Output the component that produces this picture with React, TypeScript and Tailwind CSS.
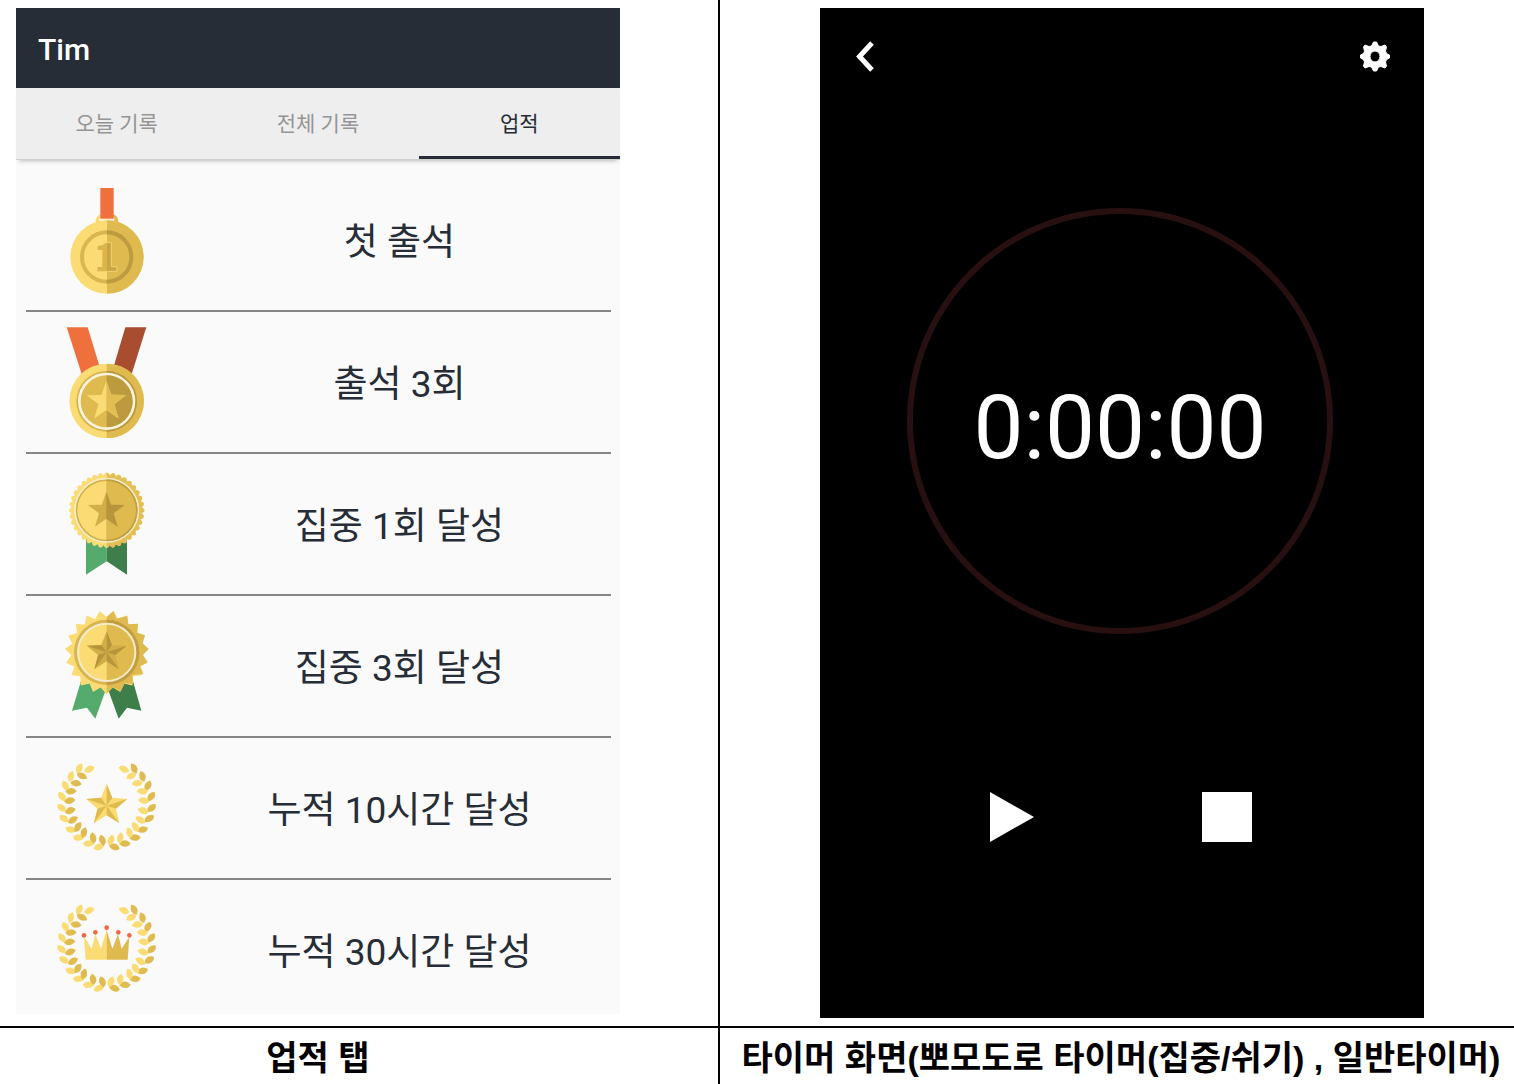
import { useState, type ReactNode } from "react";

const LIGHT = "#fbdc74";
const DARK = "#dfba4e";
const SHADE = "#b8973c";

function starPoints(cx: number, cy: number, outer: number, inner: number, count = 5, turn = 0) {
  const points: string[] = [];
  for (let i = 0; i < count * 2; i++) {
    const r = i % 2 === 0 ? outer : inner;
    const a = (Math.PI * i) / count + (turn * Math.PI) / 180;
    points.push(`${(cx + r * Math.sin(a)).toFixed(1)},${(cy - r * Math.cos(a)).toFixed(1)}`);
  }
  return points.join(" ");
}

function scallopPoints(cx: number, cy: number, radius: number, depth: number, count: number, sweep = 360) {
  const points: string[] = [];
  for (let i = 0; i <= sweep; i++) {
    const a = (Math.PI * i) / 180;
    const r = radius - depth + depth * Math.abs(Math.cos((a * count) / 2)) * 1.4;
    points.push(`${(cx + r * Math.sin(a)).toFixed(1)},${(cy - r * Math.cos(a)).toFixed(1)}`);
  }
  return points.join(" ");
}

function facets(cx: number, cy: number, outer: number, inner: number) {
  const at = (r: number, deg: number) => {
    const a = (deg * Math.PI) / 180;
    return `${(cx + r * Math.sin(a)).toFixed(1)},${(cy - r * Math.cos(a)).toFixed(1)}`;
  };
  return [0, 1, 2, 3, 4].map((i) => `${cx},${cy} ${at(outer, i * 72)} ${at(inner, i * 72 + 36)}`);
}

function Icon({ top, children }: { top: number; children: ReactNode }) {
  return (
    <svg aria-hidden="true" width="114" height="112" viewBox={`0 ${top} 342 336`} className="shrink-0">
      {children}
    </svg>
  );
}

function FirstMedal() {
  return (
    <Icon top={27}>
      <path d="M136 146Q136 118 158 118H170V146Z" fill={LIGHT} />
      <path d="M206 146Q206 118 184 118H170V146Z" fill={DARK} />
      <rect x="148" y="128" width="45" height="11" fill="#fdf3d2" />
      <rect x="151" y="39" width="40" height="92" fill="#f0703d" />
      <circle cx="171" cy="246" r="110" fill={LIGHT} />
      <path d="M171 136A110 110 0 0 1 171 356Z" fill={DARK} />
      <circle cx="170" cy="246" r="74" fill="none" stroke="#d9b64f" strokeWidth="12" />
      <path d="M170 172A74 74 0 0 1 170 320" fill="none" stroke="#bd9b40" strokeWidth="12" />
      <path d="M143 225V213Q160 212 167 203H171V289H142V276H157V225Z" fill="#d9b54c" />
      <path d="M171 203H183V275H200V289H171Z" fill="#c9a645" />
      <path d="M167 203H184V275H201V289H142" fill="none" stroke="#f3d069" strokeWidth="3" />
    </Icon>
  );
}

function StarMedal() {
  return (
    <Icon top={33}>
      <path d="M50 37H113L150 158L96 180Z" fill="#f0703d" />
      <path d="M226 37H289L244 180L190 158Z" fill="#a94d30" />
      <circle cx="170" cy="258" r="112" fill={LIGHT} />
      <path d="M170 146A112 112 0 0 1 170 370Z" fill={DARK} />
      <circle cx="170" cy="259" r="91" fill="#d5b14a" />
      <path d="M170 168A91 91 0 0 1 170 350Z" fill={SHADE} />
      <circle cx="170" cy="259" r="82" fill={DARK} stroke="#faf3df" strokeWidth="8" />
      <path d="M170 181A78 78 0 0 1 170 337Z" fill="#bc9a3e" />
      <polygon points={starPoints(169, 260, 62, 25)} fill={LIGHT} />
      <path d="M169 198L184 238L227 240L194 268L206 309L169 286Z" fill="#e2be52" />
    </Icon>
  );
}

function RosetteMedal() {
  return (
    <Icon top={24}>
      <path d="M108 225H170V304L108 344Z" fill="#55ab6d" />
      <path d="M231 225H170V304L231 344Z" fill="#3d7e4b" />
      <polygon points={scallopPoints(170, 151, 111, 6, 36)} fill={LIGHT} />
      <polygon points={scallopPoints(170, 151, 111, 6, 36, 180)} fill="#e3bf55" />
      <circle cx="170" cy="151" r="95" fill="#d2ae49" stroke="#f7edcb" strokeWidth="5" />
      <circle cx="170" cy="151" r="88" fill={LIGHT} />
      <path d="M170 58A93 93 0 0 1 170 244Z" fill="#bf9d41" />
      <path d="M170 63A88 88 0 0 1 170 239Z" fill={DARK} />
      <polygon points={starPoints(169, 153, 58, 23)} fill="#d2ae49" />
      <path d="M169 95L183 134L224 135L191 160L203 200L169 177Z" fill="#b7953b" />
    </Icon>
  );
}

function BurstMedal() {
  return (
    <Icon top={30}>
      <path d="M94 240L66 332L111 323L136 356L168 268V240Z" fill="#55ab6d" />
      <path d="M248 240L274 332L231 323L206 356L174 268V240Z" fill="#3d7e4b" />
      <path d="M92 222H248V252L224 250L212 274L190 262L170 280L150 262L130 274L118 250L92 252Z" fill="#f0cb60" />
      <polygon points={starPoints(170, 157, 126, 106, 19, 9.47)} fill={LIGHT} />
      <path
        d="M170 51L190 33L199 56L232 47L235 73L264 71L262 98L285 106L278 130L296 147L279 165L293 187L271 199L280 222L248 225V252L224 250L212 274L190 262L170 280Z"
        fill={DARK}
      />
      <circle cx="170" cy="157" r="98" fill="#d9b54e" />
      <path d="M170 59A98 98 0 0 1 170 255Z" fill="#c09d42" />
      <circle cx="170" cy="157" r="86" fill={LIGHT} stroke="#f3ebcd" strokeWidth="6" />
      <path d="M170 74A83 83 0 0 1 170 240Z" fill={DARK} />
      <polygon points={starPoints(170, 157, 63, 27)} fill="#d2ae49" />
      {facets(170, 157, 63, 27).map((p) => (
        <polygon key={p} points={p} fill="#b7953b" />
      ))}
    </Icon>
  );
}

const LEAVES: [number, number, number, boolean][] = [
  [118, 58, -20, true],
  [88, 55, -60, true],
  [96, 78, 30, false],
  [63, 79, -72, true],
  [78, 100, 12, false],
  [46, 107, 68, true],
  [63, 124, 2, false],
  [36, 140, 58, true],
  [59, 152, -8, false],
  [35, 174, 46, true],
  [61, 182, -18, false],
  [42, 206, 36, true],
  [69, 210, -28, false],
  [62, 239, 20, true],
  [84, 231, -55, false],
  [85, 263, 8, true],
  [102, 248, -72, false],
  [115, 281, 5, true],
  [129, 264, 84, false],
  [147, 291, -15, true],
  [157, 271, 76, false],
];

const LEAF_PATH = "M-17 0Q-4 -15 9 -8Q14 -5 17 0Q4 13 -9 8Q-14 5 -17 0Z";

function Laurel() {
  return (
    <>
      {LEAVES.map(([x, y, angle, outer]) => (
        <g key={`${x}-${y}`}>
          <path d={LEAF_PATH} transform={`translate(${x} ${y}) rotate(${angle})`} fill={outer ? LIGHT : "#e0bb50"} />
          <path
            d={LEAF_PATH}
            transform={`translate(${340 - x} ${y}) scale(-1 1) rotate(${angle})`}
            fill={outer && x !== 118 ? "#e0bb50" : LIGHT}
          />
        </g>
      ))}
    </>
  );
}

function LaurelStar() {
  return (
    <Icon top={6}>
      <Laurel />
      <polygon points={starPoints(170, 167, 65, 29)} fill={LIGHT} />
      {facets(170, 167, 65, 29).map((p) => (
        <polygon key={p} points={p} fill={DARK} />
      ))}
    </Icon>
  );
}

function LaurelCrown() {
  return (
    <Icon top={12}>
      <g transform="translate(0 4)">
        <Laurel />
      </g>
      <path d="M102 140L125 176L136 132L153 176L170 120V209H107Z" fill={LIGHT} />
      <path d="M238 140L215 176L204 132L187 176L170 120V209H233Z" fill={DARK} />
      {[
        [102, 136],
        [136, 127],
        [170, 113],
        [205, 127],
        [238, 136],
      ].map(([x, y]) => (
        <circle key={x} cx={x} cy={y} r="7" fill="#ee6a43" />
      ))}
    </Icon>
  );
}

const ACHIEVEMENTS = [
  { label: "첫 출석", Medal: FirstMedal },
  { label: "출석 3회", Medal: StarMedal },
  { label: "집중 1회 달성", Medal: RosetteMedal },
  { label: "집중 3회 달성", Medal: BurstMedal },
  { label: "누적 10시간 달성", Medal: LaurelStar },
  { label: "누적 30시간 달성", Medal: LaurelCrown },
];

const TABS = ["오늘 기록", "전체 기록", "업적"];

function AchievementsScreen() {
  const [active, setActive] = useState(2);
  return (
    <div className="w-full bg-[#fafafa] font-['Roboto','Noto_Sans_CJK_KR',sans-serif]">
      <header className="flex h-20 items-center bg-[#262d37] px-[22px] pt-1">
        <h1 className="text-[30px] leading-10 font-medium text-white">Tim</h1>
      </header>
      <div
        role="tablist"
        className="grid h-18 grid-cols-3 border-b border-[#cfcfcf] bg-[#eeeeee] shadow-[0_4px_4px_-3px_rgba(0,0,0,0.25)]"
      >
        {TABS.map((tab, i) => (
          <button
            key={tab}
            type="button"
            role="tab"
            aria-selected={i === active}
            onClick={() => setActive(i)}
            className={
              i === active
                ? "border-b-3 border-[#262d37] pt-1.5 text-[21px] text-[#262d37]"
                : "border-b-3 border-transparent pt-1.5 text-[21px] text-[#959595]"
            }
          >
            {tab}
          </button>
        ))}
      </div>
      <ul className="pr-[9px] pl-[10px] pt-[10px]">
        {ACHIEVEMENTS.map(({ label, Medal }) => (
          <li
            key={label}
            className="flex items-center border-b-2 border-[#858688] py-3.5 pl-6 last:border-b-0 last:pb-2"
          >
            <Medal />
            <span className="ml-6 flex-1 pt-1.5 text-center text-[37px] leading-[56px] text-[#262d37]">{label}</span>
          </li>
        ))}
      </ul>
    </div>
  );
}

function TimerScreen() {
  return (
    <div className="w-full bg-black pt-[33px] pb-[176px] font-['Roboto',sans-serif] text-white">
      <header className="flex items-center justify-between pr-[34px] pl-[35px]">
        <button type="button" aria-label="뒤로">
          <svg width="19" height="31" viewBox="0 0 19 31" fill="none" stroke="currentColor" strokeWidth="5">
            <path d="M17 2L4.500 15.500L17 29" />
          </svg>
        </button>
        <button type="button" aria-label="설정">
          <svg width="30" height="31" viewBox="0 0 30 31">
            <path
              fill="currentColor"
              fillRule="evenodd"
              stroke="currentColor"
              strokeLinejoin="round"
              d="M13.500 1H16.500L18.500 5L21 5.500L25 4L26.500 6L25.500 10L26.500 12.500L29.500 14V17L26.500 18.500L25.500 21L26.500 25L25 27L21 25.500L18.500 26L16.500 30H13.500L11.500 26L9 25.500L5 27L3.500 25L4.500 21L3.500 18.500L0.500 17V14L3.500 12.500L4.500 10L3.500 6L5 4L9 5.500L11.500 5ZM15 10A5 5.500 0 1 0 15 21A5 5.500 0 1 0 15 10Z"
            />
          </svg>
        </button>
      </header>
      <div className="mt-[136px] flex justify-center pr-1">
        <div className="flex size-[426px] items-center justify-center rounded-full border-6 border-[#281011] pt-3">
          <time className="text-[89px] leading-none">0:00:00</time>
        </div>
      </div>
      <div className="mt-[158px] flex justify-center gap-[168px] pr-0.5">
        <button type="button" aria-label="시작">
          <svg width="44" height="50" viewBox="0 0 44 50">
            <path d="M0 0L44 25L0 50Z" fill="currentColor" />
          </svg>
        </button>
        <button type="button" aria-label="정지" className="size-[50px] bg-white" />
      </div>
    </div>
  );
}

const CAPTION =
  "border-t-2 border-black pt-1 font-['Liberation_Sans','Noto_Sans_CJK_KR',sans-serif] text-[34px] leading-[52px] font-bold whitespace-nowrap text-black";

export default function App() {
  return (
    <main className="grid min-h-screen grid-cols-[720fr_794fr] bg-white">
      <figure className="flex min-w-0 flex-col border-r-2 border-black">
        <div className="flex flex-1 items-start pt-2 pr-[98px] pl-4">
          <AchievementsScreen />
        </div>
        <figcaption className={CAPTION}>
          <div className="pr-[98px] pl-4 text-center">업적 탭</div>
        </figcaption>
      </figure>
      <figure className="flex min-w-0 flex-col">
        <div className="flex flex-1 items-start py-2 pr-[90px] pl-[100px]">
          <TimerScreen />
        </div>
        <figcaption className={CAPTION}>
          <div className="flex justify-center pl-2">타이머 화면(뽀모도로 타이머(집중/쉬기) , 일반타이머)</div>
        </figcaption>
      </figure>
    </main>
  );
}
